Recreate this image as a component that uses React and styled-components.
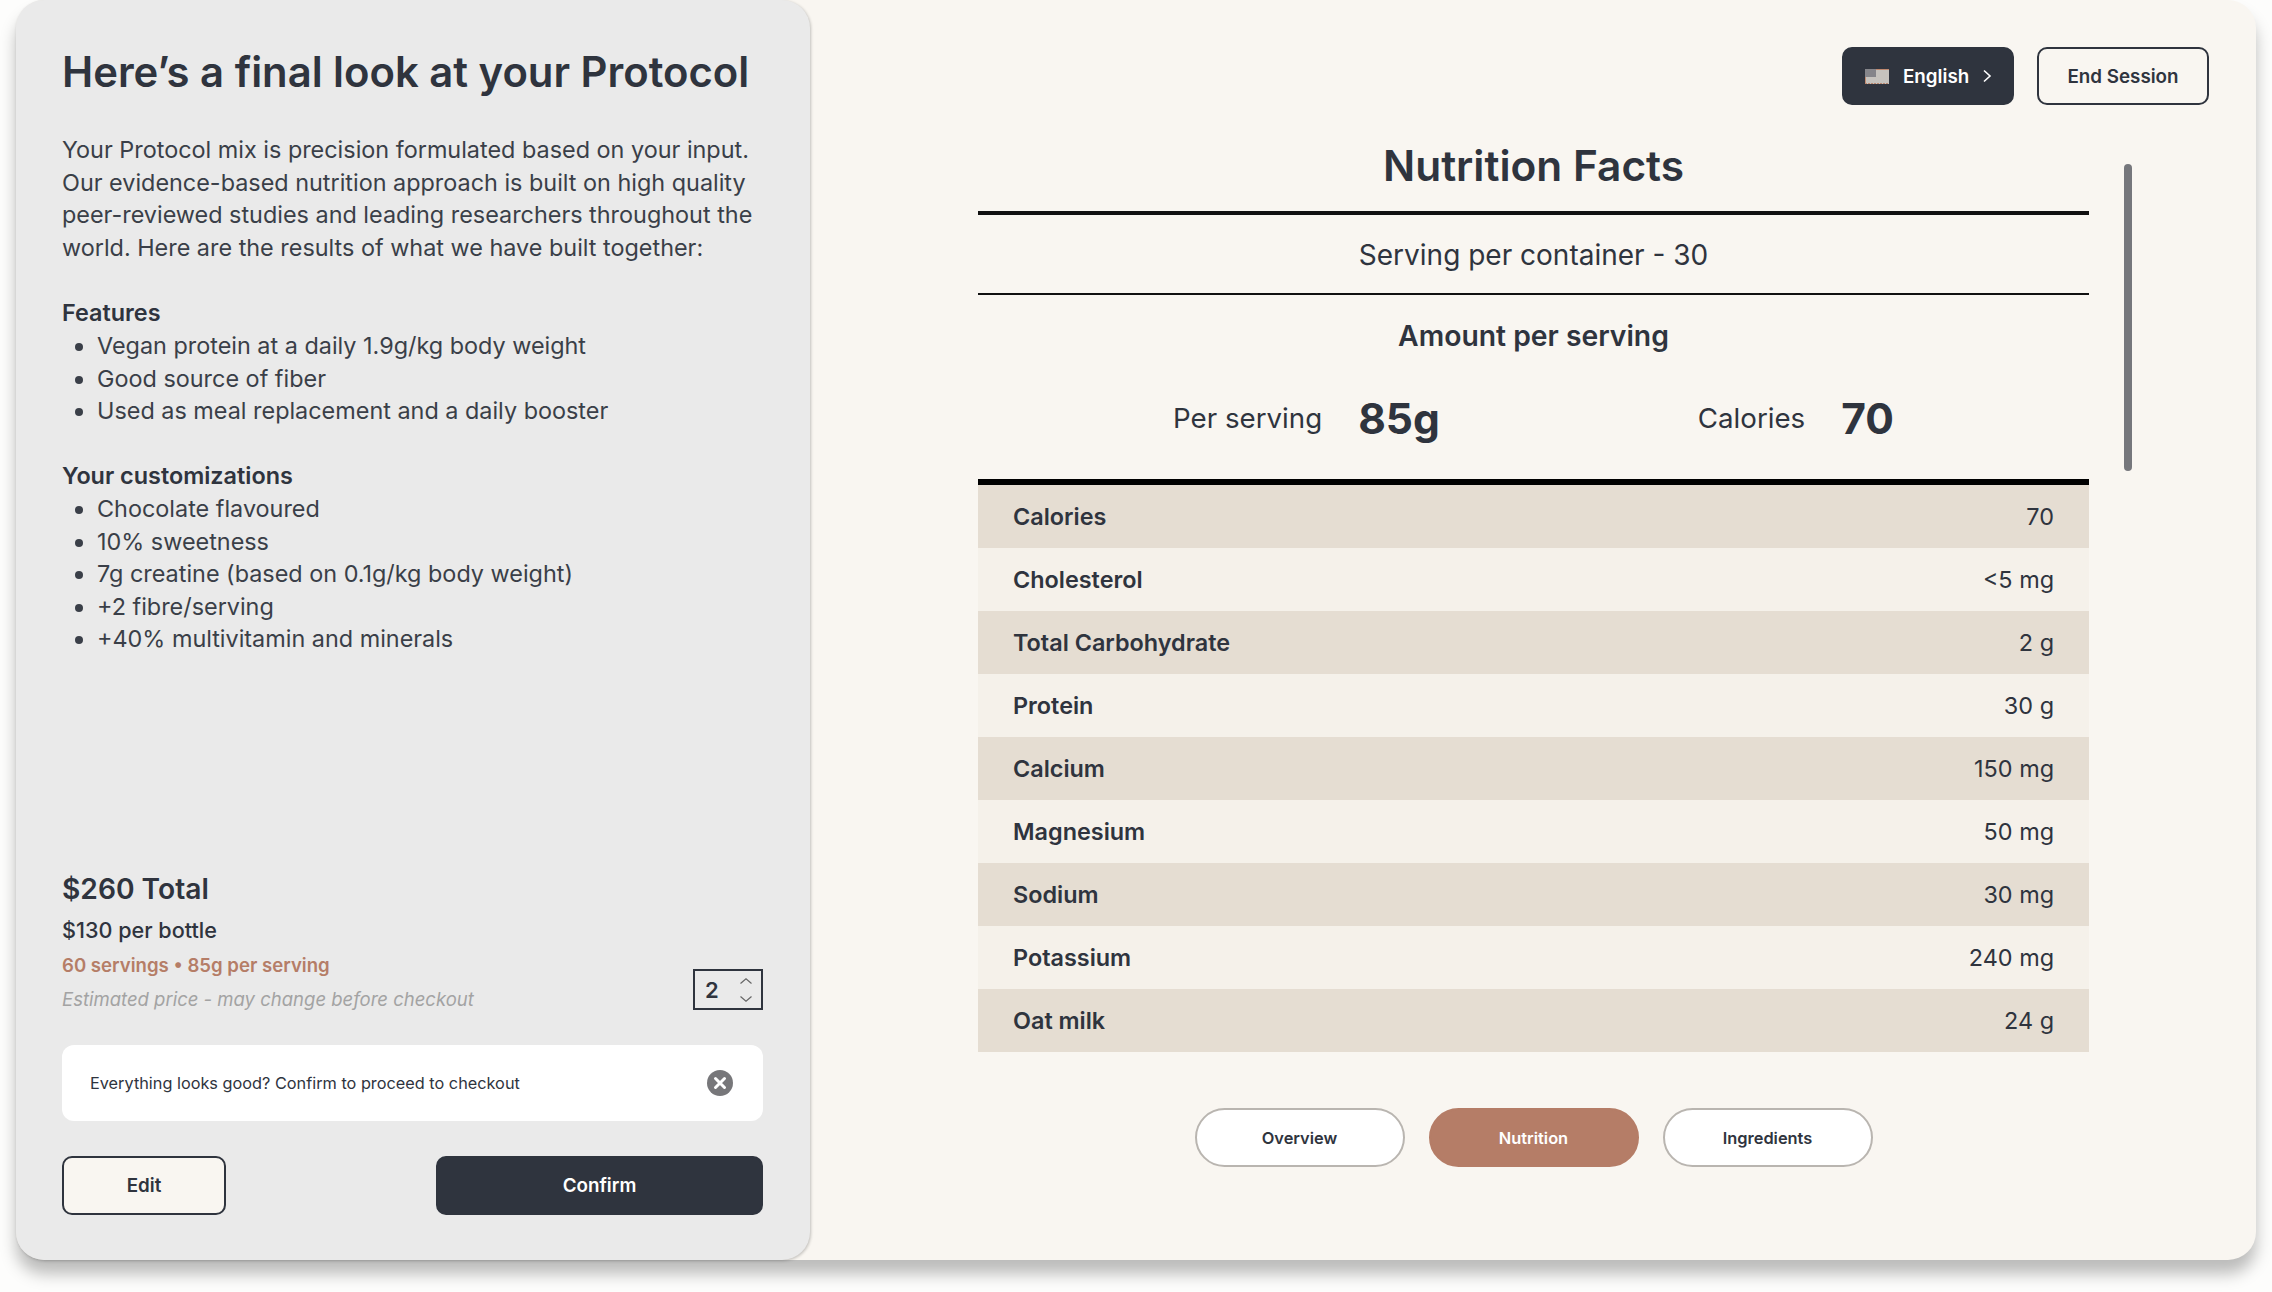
import React from 'react'
import styled, {createGlobalStyle} from 'styled-components'

const ink = '#2f343e'
const accent = '#b57d67'

const GlobalStyle = createGlobalStyle`
	html, body {
		margin: 0;
		padding: 0;
		background: #fdfdfc;
	}
	* {
		box-sizing: border-box;
	}
	body {
		font-family: Inter, "Noto Sans", sans-serif;
		color: ${ink};
	}
`

const Page = styled.div`
	width: 2272px;
	height: 1292px;
	padding: 0 16px 32px;
	overflow: hidden;
`

const Frame = styled.div`
	display: flex;
	height: 100%;
	background: #f9f6f1;
	border-radius: 28px;
	box-shadow: 0 14px 16px rgba(0, 0, 0, 0.26);
`

const Sidebar = styled.aside`
	display: flex;
	flex-direction: column;
	justify-content: space-between;
	width: 794px;
	flex-shrink: 0;
	padding: 43px 47px 45px 46px;
	background: #eaeaea;
	border-radius: 28px;
	box-shadow: 1px 1px 3px rgba(0, 0, 0, 0.22);
`

const Title = styled.h1`
	margin: 0 0 33px;
	font-size: 41.8px;
	line-height: 58px;
	font-weight: 600;
	white-space: nowrap;
`

const Copy = styled.p`
	margin: 0 0 33px;
	font-size: 23.4px;
	line-height: 32.6px;
	white-space: nowrap;
	color: #3a3f48;
`

const Label = styled.div`
	font-size: 23.4px;
	line-height: 32.6px;
	font-weight: 600;
`

const List = styled.ul`
	margin: 0 0 32.6px;
	padding-left: 35px;
	font-size: 23.4px;
	line-height: 32.6px;
	color: #3a3f48;
`

const BuyRow = styled.div`
	display: flex;
	justify-content: space-between;
	align-items: flex-end;
`

const Total = styled.div`
	font-size: 28.2px;
	line-height: 40px;
	font-weight: 600;
`

const PerBottle = styled.div`
	margin-top: 5px;
	font-size: 21.6px;
	line-height: 32px;
	font-weight: 500;
`

const Servings = styled.div`
	margin-top: 3px;
	font-size: 18.6px;
	line-height: 32px;
	font-weight: 600;
	color: ${accent};
`

const Estimate = styled.div`
	margin-top: 2px;
	font-size: 18.5px;
	line-height: 32px;
	font-style: italic;
	color: #a3a3a3;
`

const Stepper = styled.div`
	display: flex;
	align-items: center;
	justify-content: space-between;
	width: 70px;
	height: 41px;
	margin-bottom: 5px;
	padding: 0 9px 0 10px;
	border: 2px solid ${ink};
	font-size: 22px;
	font-weight: 600;
`

const StepperArrows = styled.div`
	display: flex;
	flex-direction: column;
	gap: 12px;
`

const Notice = styled.div`
	display: flex;
	align-items: center;
	justify-content: space-between;
	height: 76px;
	margin-top: 30px;
	padding: 0 30px 0 28px;
	background: #fff;
	border-radius: 12px;
	font-size: 16.3px;
`

const Actions = styled.div`
	display: flex;
	justify-content: space-between;
	margin-top: 35px;
`

const SolidButton = styled.button`
	width: ${p => p.$width}px;
	height: 59px;
	background: ${ink};
	border: 2px solid ${ink};
	border-radius: 10px;
	color: #fff;
	font: 600 18.8px Inter, sans-serif;
`

const OutlineButton = styled(SolidButton)`
	background: ${p => p.$fill};
	color: ${ink};
`

const Main = styled.main`
	flex: 1;
	display: flex;
	flex-direction: column;
	padding: 47px 47px 0 168px;
`

const TopBar = styled.div`
	display: flex;
	justify-content: flex-end;
	gap: 23px;
`

const LanguageButton = styled(SolidButton)`
	display: flex;
	align-items: center;
	height: 58px;
	padding: 0 0 0 21px;
`

const LanguageName = styled.span`
	margin: 0 13px 0 14px;
`

const SessionButton = styled(OutlineButton)`
	height: 58px;
`

const Content = styled.div`
	display: flex;
	gap: 35px;
`

const Facts = styled.div`
	width: 1111px;
	flex-shrink: 0;
`

const Scrollbar = styled.div`
	width: 8px;
	height: 307px;
	margin-top: 59px;
	background: #76777c;
	border-radius: 4px;
`

const FactsTitle = styled.h2`
	margin: 37px 0 0;
	padding: 0 0 21px;
	border-bottom: 4px solid #111;
	font-size: 42.4px;
	line-height: 48px;
	font-weight: 600;
	text-align: center;
`

const ServingLine = styled.div`
	height: 80px;
	border-bottom: 2px solid #111;
	font-size: 28px;
	line-height: 80px;
	text-align: center;
`

const AmountTitle = styled.div`
	margin-top: 21px;
	font-size: 28.3px;
	line-height: 40px;
	font-weight: 600;
	text-align: center;
`

const Amounts = styled.div`
	display: flex;
	justify-content: center;
	align-items: center;
	gap: 258px;
	height: 129px;
	padding-top: 1px;
	border-bottom: 6px solid #000;
`

const Amount = styled.div`
	display: flex;
	align-items: center;
	gap: 36px;
	font-size: 27.7px;
`

const AmountValue = styled.strong`
	font-size: 42.5px;
	font-weight: 700;
`

const Row = styled.div`
	display: flex;
	align-items: center;
	justify-content: space-between;
	height: 63px;
	padding: 0 35px;
	background: ${p => (p.$odd ? '#e5ddd2' : '#f5f1ea')};
	font-size: 23.4px;
`

const RowName = styled.span`
	font-weight: 600;
`

const Tabs = styled.div`
	display: flex;
	justify-content: center;
	gap: 24px;
	margin-top: 56px;
`

const Tab = styled.button`
	width: 210px;
	height: 59px;
	background: ${p => (p.$active ? accent : '#fff')};
	border: 2px solid ${p => (p.$active ? accent : '#b9b5b0')};
	border-radius: 30px;
	color: ${p => (p.$active ? '#fff' : ink)};
	font: 600 16.4px Inter, sans-serif;
`

const Chevron = ({up}) => (
	<svg width="12" height="6" viewBox="0 0 12 6" fill="none" stroke="#666" strokeWidth="1.2">
		<path d={up ? 'M.5 5.5L6 .8l5.5 4.7' : 'M.5.5L6 5.2 11.5.5'}/>
	</svg>
)

const CloseIcon = () => (
	<svg width="26" height="26" viewBox="0 0 26 26">
		<circle cx="13" cy="13" r="13" fill="#77777a"/>
		<path d="M8.5 8.5l9 9M17.5 8.5l-9 9" stroke="#fff" strokeWidth="3" strokeLinecap="round"/>
	</svg>
)

const Flag = () => (
	<svg width="24" height="15" viewBox="0 0 24 15">
		<rect width="24" height="15" fill="#c6c3be"/>
		<path d="M0 .5h24M.5 8v7" stroke="#c08a70" strokeWidth="1"/>
		<path d="M0 14.5h24" stroke="#b9876f" strokeWidth="1" strokeDasharray="2 1"/>
		<rect width="11" height="8" fill="#85858a"/>
	</svg>
)

const ArrowRight = () => (
	<svg width="10" height="14" viewBox="0 0 10 14" fill="none" stroke="#fff" strokeWidth="1.6">
		<path d="M2 1.5L8 7l-6 5.5"/>
	</svg>
)

const nutrition = [
	['Calories', '70'],
	['Cholesterol', '<5 mg'],
	['Total Carbohydrate', '2 g'],
	['Protein', '30 g'],
	['Calcium', '150 mg'],
	['Magnesium', '50 mg'],
	['Sodium', '30 mg'],
	['Potassium', '240 mg'],
	['Oat milk', '24 g'],
]

const App = () => (
	<Page>
		<GlobalStyle/>
		<Frame>
			<Sidebar>
				<div>
					<Title>Here’s a final look at your Protocol</Title>
					<Copy>
						Your Protocol mix is precision formulated based on your input.<br/>
						Our evidence-based nutrition approach is built on high quality<br/>
						peer-reviewed studies and leading researchers throughout the<br/>
						world. Here are the results of what we have built together:
					</Copy>
					<Label>Features</Label>
					<List>
						<li>Vegan protein at a daily 1.9g/kg body weight</li>
						<li>Good source of fiber</li>
						<li>Used as meal replacement and a daily booster</li>
					</List>
					<Label>Your customizations</Label>
					<List>
						<li>Chocolate flavoured</li>
						<li>10% sweetness</li>
						<li>7g creatine (based on 0.1g/kg body weight)</li>
						<li>+2 fibre/serving</li>
						<li>+40% multivitamin and minerals</li>
					</List>
				</div>
				<div>
					<BuyRow>
						<div>
							<Total>$260 Total</Total>
							<PerBottle>$130 per bottle</PerBottle>
							<Servings>60 servings • 85g per serving</Servings>
							<Estimate>Estimated price - may change before checkout</Estimate>
						</div>
						<Stepper>
							2
							<StepperArrows>
								<Chevron up/>
								<Chevron/>
							</StepperArrows>
						</Stepper>
					</BuyRow>
					<Notice>
						Everything looks good? Confirm to proceed to checkout
						<CloseIcon/>
					</Notice>
					<Actions>
						<OutlineButton $width={164} $fill="#f9f6f1">Edit</OutlineButton>
						<SolidButton $width={327}>Confirm</SolidButton>
					</Actions>
				</div>
			</Sidebar>
			<Main>
				<TopBar>
					<LanguageButton $width={172}>
						<Flag/>
						<LanguageName>English</LanguageName>
						<ArrowRight/>
					</LanguageButton>
					<SessionButton $width={172} $fill="transparent">End Session</SessionButton>
				</TopBar>
				<Content>
					<Facts>
						<FactsTitle>Nutrition Facts</FactsTitle>
						<ServingLine>Serving per container - 30</ServingLine>
						<AmountTitle>Amount per serving</AmountTitle>
						<Amounts>
							<Amount>Per serving <AmountValue>85g</AmountValue></Amount>
							<Amount>Calories <AmountValue>70</AmountValue></Amount>
						</Amounts>
						{nutrition.map(([name, value], i) => (
							<Row key={name} $odd={i % 2 === 0}>
								<RowName>{name}</RowName>
								<span>{value}</span>
							</Row>
						))}
						<Tabs>
							<Tab>Overview</Tab>
							<Tab $active>Nutrition</Tab>
							<Tab>Ingredients</Tab>
						</Tabs>
					</Facts>
					<Scrollbar/>
				</Content>
			</Main>
		</Frame>
	</Page>
)

export default App
